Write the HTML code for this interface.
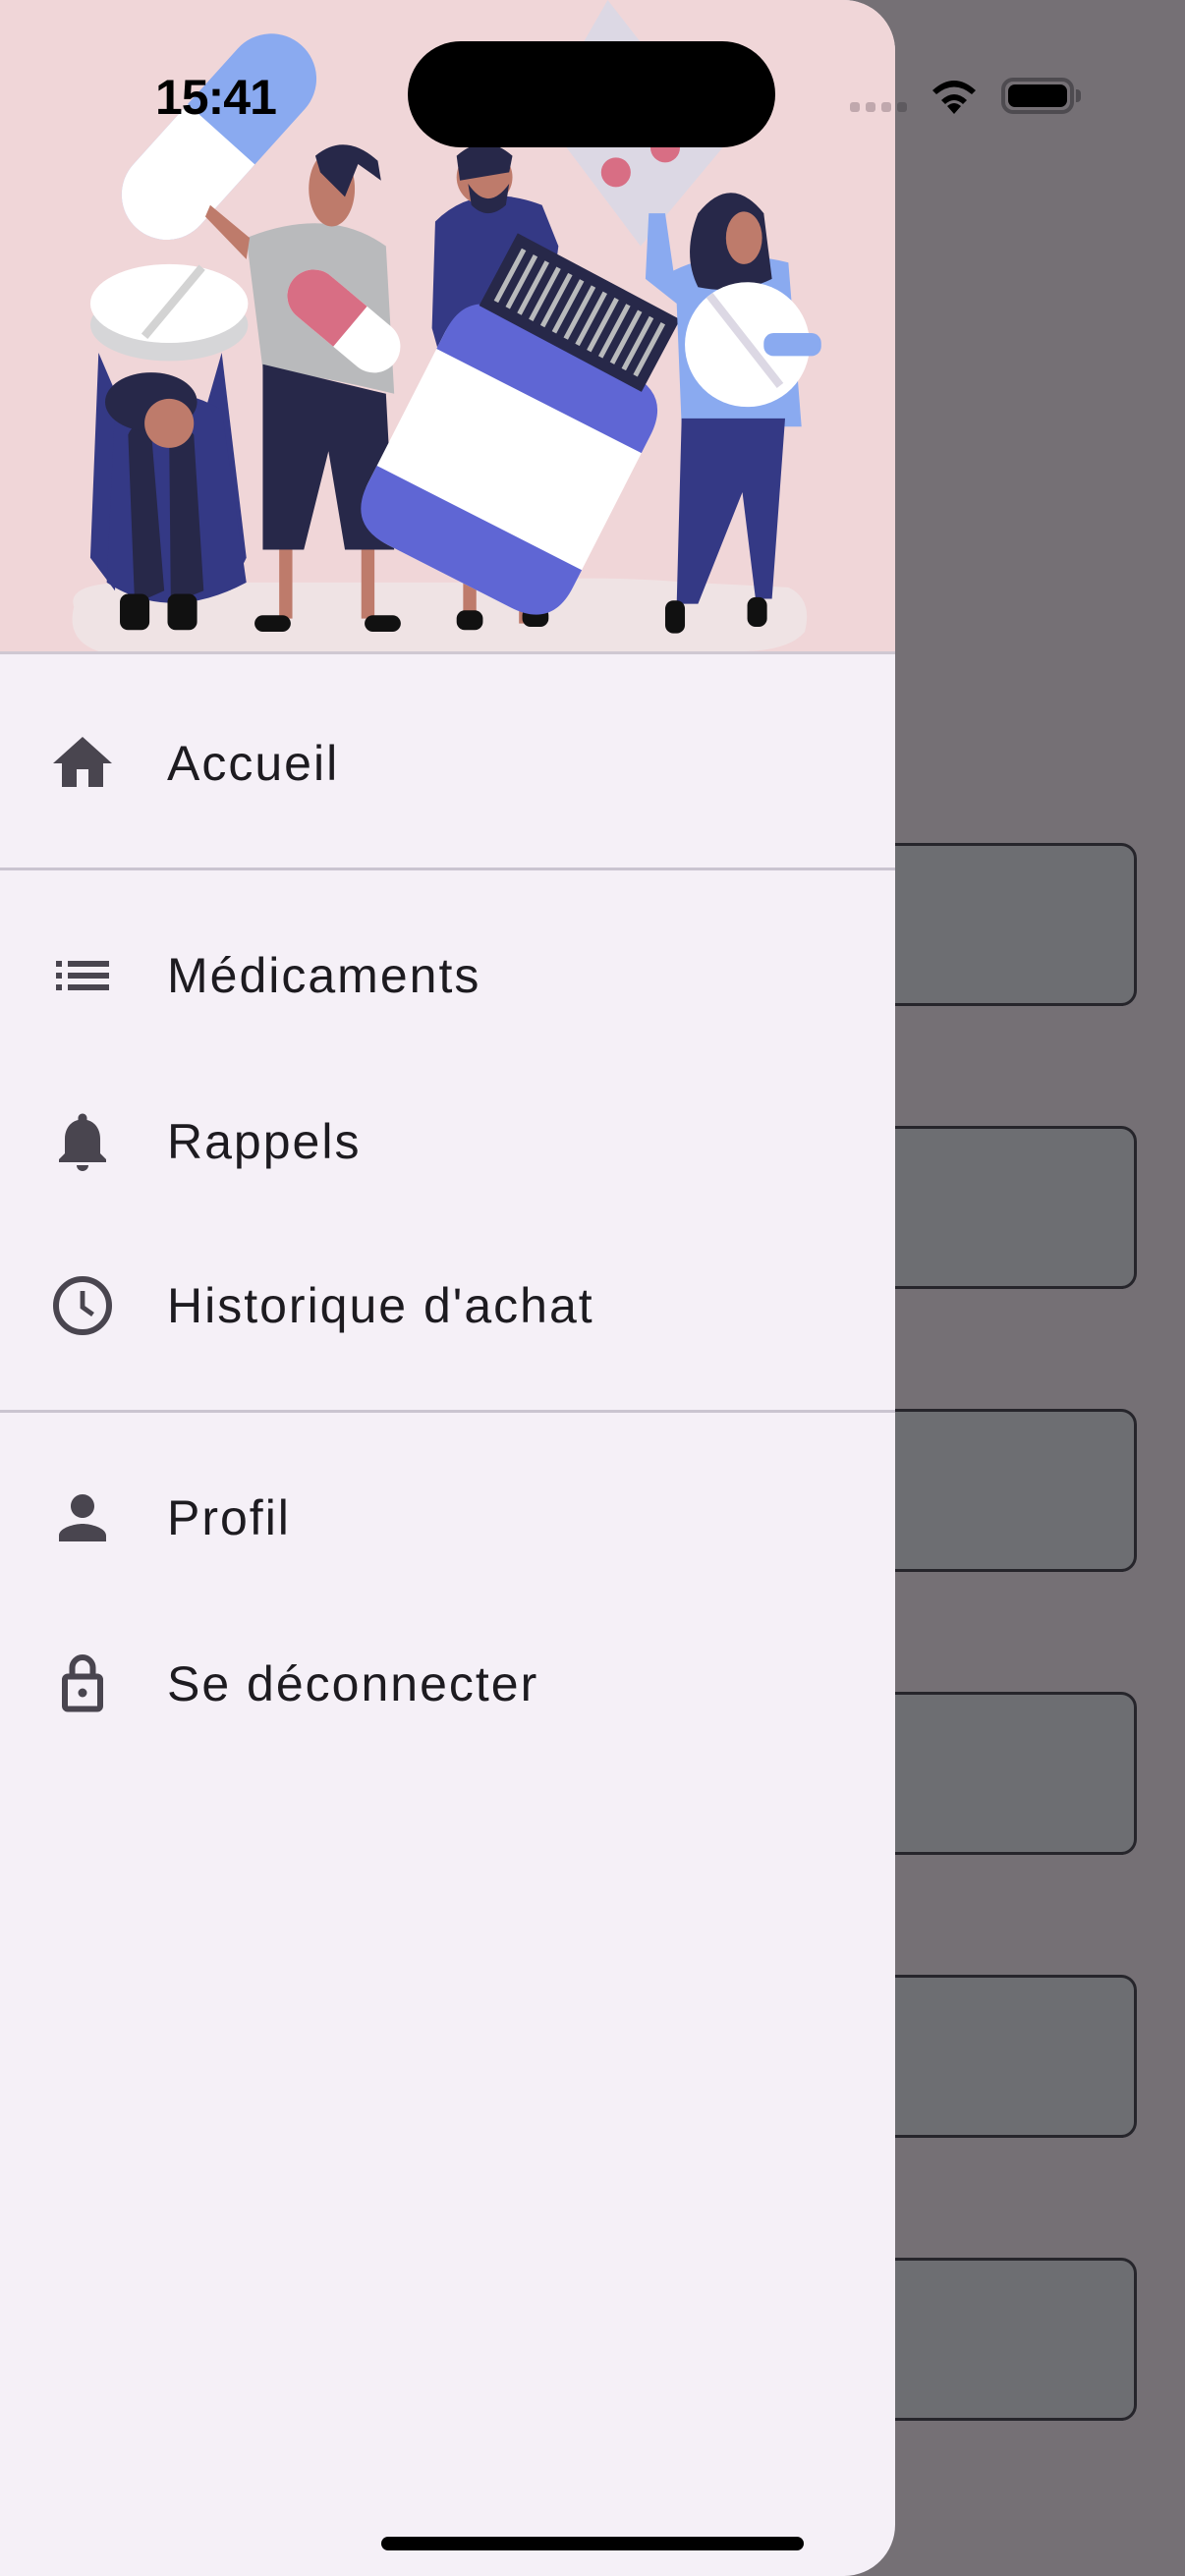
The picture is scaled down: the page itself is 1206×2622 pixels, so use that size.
<!DOCTYPE html>
<html><head><meta charset="utf-8"><style>
*{margin:0;padding:0;box-sizing:border-box}
html,body{width:1206px;height:2622px;overflow:hidden;background:#757075;font-family:"Liberation Sans",sans-serif}
.card{position:absolute;left:840px;width:317px;height:166px;background:#6d6e72;border:3px solid #26252b;border-radius:16px}
.drawer{position:absolute;left:0;top:0;width:911px;height:2622px;background:#f5f0f7;border-radius:0 52px 52px 0;overflow:hidden}
.hdr{position:absolute;left:0;top:0;width:911px;height:666px;background:#f0d6d8;border-bottom:3px solid #cfc8d2}
.div{position:absolute;left:0;width:911px;height:3px;background:#cac4d0}
.item{position:absolute;left:0;width:911px;height:100px;display:flex;align-items:center}
.item svg{position:absolute;left:48px;width:72px;height:72px}
.item span{position:absolute;left:170px;font-size:50px;letter-spacing:2px;color:#1d1b20}
</style></head><body>
<div class="card" style="top:858px"></div>
<div class="card" style="top:1146px"></div>
<div class="card" style="top:1434px"></div>
<div class="card" style="top:1722px"></div>
<div class="card" style="top:2010px"></div>
<div class="card" style="top:2298px"></div>

<div class="drawer">
<div class="hdr">
<svg width="911" height="663" viewBox="0 0 545 397" preserveAspectRatio="none">
<path d="M45 370 Q40 355 80 355 L300 355 Q360 350 420 355 L480 358 Q495 365 490 385 Q480 397 450 397 L60 397 Q40 390 45 370Z" fill="#efe3e4"/>
<!-- blister -->
<path d="M370 0 L440 90 L390 150 L330 70 Z" fill="#dcd8e4"/>
<circle cx="375" cy="105" r="9" fill="#d86e84"/><circle cx="405" cy="90" r="9" fill="#d86e84"/>
<!-- big capsule -->
<g transform="rotate(-48 133 83)">
<rect x="58" y="56" width="150" height="55" rx="27.5" fill="#8aaaf0"/>
<path d="M85.5 56 L135 56 L135 111 L85.5 111 A27.5 27.5 0 0 1 85.5 56Z" fill="#fff"/>
</g>
<!-- round pill left -->
<ellipse cx="103" cy="198" rx="48" ry="22" fill="#d6d6d8"/>
<ellipse cx="103" cy="185" rx="48" ry="24" fill="#fff"/>
<line x1="88" y1="205" x2="123" y2="163" stroke="#d3d3d3" stroke-width="5"/>
<!-- left person -->
<path d="M60 215 L55 340 L70 360 L75 250 Z" fill="#343985"/><path d="M135 215 L150 340 L140 360 L125 250 Z" fill="#343985"/>
<path d="M70 250 Q103 230 135 250 L150 355 Q103 380 65 355 Z" fill="#343985"/>
<path d="M78 265 Q82 255 92 262 L100 360 L82 368 Z M103 265 Q110 255 118 265 L124 360 L104 368 Z" fill="#272849"/>
<ellipse cx="92" cy="245" rx="28" ry="18" fill="#272849"/>
<circle cx="103" cy="258" r="15" fill="#be7b6b"/>
<rect x="73" y="362" width="18" height="22" rx="5" fill="#111"/><rect x="102" y="362" width="18" height="22" rx="5" fill="#111"/>
<!-- person 2 -->
<path d="M150 145 Q200 125 235 150 L240 240 Q200 230 160 225 Z" fill="#b9babc"/>
<path d="M160 222 L235 240 L240 335 L210 335 L200 275 L185 335 L160 335 Z" fill="#272849"/>
<path d="M128 125 L152 145 L150 158 L125 132 Z" fill="#be7b6b"/>
<rect x="170" y="335" width="8" height="42" fill="#be7b6b"/><rect x="220" y="335" width="8" height="42" fill="#be7b6b"/>
<ellipse cx="202" cy="115" rx="14" ry="23" fill="#be7b6b"/>
<path d="M192 95 Q210 80 230 98 L232 110 L218 100 L210 120 L195 105 Z" fill="#272849"/>
<rect x="155" y="375" width="22" height="10" rx="5" fill="#111"/><rect x="222" y="375" width="22" height="10" rx="5" fill="#111"/>
<g transform="rotate(40 210 195)"><rect x="170" y="180" width="80" height="32" rx="16" fill="#fff"/><rect x="170" y="180" width="45" height="32" rx="16" fill="#d86e84"/><rect x="200" y="180" width="15" height="32" fill="#d86e84"/></g>
<!-- person 3 -->
<path d="M265 135 Q290 110 330 125 L340 150 L330 225 L270 225 L263 200 Z" fill="#343985"/>
<circle cx="295" cy="108" r="17" fill="#be7b6b"/>
<path d="M278 95 Q295 80 312 95 L310 105 L280 110 Z" fill="#272849"/>
<path d="M285 112 Q297 130 310 112 L308 125 Q297 135 287 125Z" fill="#272849"/>
<rect x="282" y="350" width="8" height="30" fill="#be7b6b"/><rect x="316" y="350" width="8" height="30" fill="#be7b6b"/>
<rect x="278" y="372" width="16" height="12" rx="5" fill="#111"/><rect x="318" y="370" width="16" height="12" rx="5" fill="#111"/>
<!-- bottle -->
<g transform="rotate(27 310 280)"><rect x="240" y="200" width="140" height="160" rx="28" fill="#fff"/><path d="M240 228 Q240 200 268 200 L352 200 Q380 200 380 228 L380 240 L240 240Z" fill="#5f66d4"/><path d="M240 320 L380 320 L380 332 Q380 360 352 360 L268 360 Q240 360 240 332Z" fill="#5f66d4"/></g>
<!-- barcode -->
<g transform="rotate(28 352 190)"><rect x="297" y="165" width="112" height="50" fill="#272849"/>
<g stroke="#b9babc" stroke-width="3"><line x1="305" y1="172" x2="305" y2="208"/><line x1="313" y1="172" x2="313" y2="208"/><line x1="321" y1="172" x2="321" y2="208"/><line x1="329" y1="172" x2="329" y2="208"/><line x1="337" y1="172" x2="337" y2="208"/><line x1="345" y1="172" x2="345" y2="208"/><line x1="353" y1="172" x2="353" y2="208"/><line x1="361" y1="172" x2="361" y2="208"/><line x1="369" y1="172" x2="369" y2="208"/><line x1="377" y1="172" x2="377" y2="208"/><line x1="385" y1="172" x2="385" y2="208"/><line x1="393" y1="172" x2="393" y2="208"/><line x1="401" y1="172" x2="401" y2="208"/></g></g>
<!-- person 4 -->
<path d="M395 130 L405 130 L410 165 Q440 150 480 160 L488 260 L415 260 L412 185 L393 170 Z" fill="#8aaaf0"/>
<path d="M415 255 L478 255 L470 365 L460 365 L452 300 L425 368 L412 368 Z" fill="#343985"/>
<path d="M425 130 Q445 105 465 130 L470 170 Q450 180 425 175 Q415 155 425 130Z" fill="#272849"/>
<ellipse cx="453" cy="145" rx="11" ry="16" fill="#be7b6b"/>
<circle cx="455" cy="210" r="38" fill="#fff"/>
<line x1="432" y1="180" x2="475" y2="235" stroke="#dcd8e4" stroke-width="5"/>
<rect x="465" y="203" width="35" height="14" rx="6" fill="#8aaaf0"/>
<rect x="405" y="366" width="12" height="20" rx="5" fill="#111"/><rect x="455" y="364" width="12" height="18" rx="5" fill="#111"/>
</svg>
</div>

<div class="item" style="top:727px"><svg viewBox="0 0 24 24"><path d="M10 20v-6h4v6h5v-8h3L12 3 2 12h3v8z" fill="#49454f"/></svg><span>Accueil</span></div>
<div class="div" style="top:883px"></div>
<div class="item" style="top:943px"><svg viewBox="0 0 24 24"><path d="M3 13h2v-2H3v2zm0 4h2v-2H3v2zm0-8h2V7H3v2zm4 4h14v-2H7v2zm0 4h14v-2H7v2zM7 7v2h14V7H7z" fill="#49454f"/></svg><span>Médicaments</span></div>
<div class="item" style="top:1112px"><svg viewBox="0 0 24 24"><path d="M12 22c1.1 0 2-.9 2-2h-4c0 1.1.9 2 2 2zm6-6v-5c0-3.070-1.63-5.64-4.5-6.32V4c0-.83-.67-1.5-1.5-1.5s-1.5.67-1.5 1.5v.68C7.64 5.36 6 7.92 6 11v5l-2 2v1h16v-1l-2-2z" fill="#49454f"/></svg><span>Rappels</span></div>
<div class="item" style="top:1279px"><svg viewBox="0 0 24 24"><circle cx="12" cy="12" r="9" fill="none" stroke="#49454f" stroke-width="2"/><path d="M12 7v5.5l3.5 2.5" fill="none" stroke="#49454f" stroke-width="1.6"/></svg><span>Historique d'achat</span></div>
<div class="div" style="top:1435px"></div>
<div class="item" style="top:1495px"><svg viewBox="0 0 24 24"><path d="M12 12c2.21 0 4-1.790 4-4s-1.79-4-4-4-4 1.79-4 4 1.79 4 4 4zm0 2c-2.67 0-8 1.34-8 4v2h16v-2c0-2.66-5.33-4-8-4z" fill="#49454f"/></svg><span>Profil</span></div>
<div class="item" style="top:1664px"><svg viewBox="0 0 24 24"><path d="M8.5 9V6.5a3.5 3.5 0 0 1 7 0V9" fill="none" stroke="#49454f" stroke-width="2"/><rect x="6" y="9.5" width="12" height="11" rx="1" fill="none" stroke="#49454f" stroke-width="2"/><circle cx="12" cy="15" r="1.5" fill="#49454f"/></svg><span>Se déconnecter</span></div>
</div>

<!-- status bar -->
<div style="position:absolute;left:158px;top:70px;font-size:50px;font-weight:bold;color:#000;letter-spacing:-1px">15:41</div>
<div style="position:absolute;left:415px;top:42px;width:374px;height:108px;background:#000;border-radius:54px"></div>
<div style="position:absolute;left:865px;top:104px;width:10px;height:10px;border-radius:3px;background:#c0a8ad"></div>
<div style="position:absolute;left:881px;top:104px;width:10px;height:10px;border-radius:3px;background:#c0a8ad"></div>
<div style="position:absolute;left:897px;top:104px;width:10px;height:10px;border-radius:3px;background:#c0a8ad"></div>
<div style="position:absolute;left:913px;top:104px;width:10px;height:10px;border-radius:3px;background:#5e5a5f"></div>
<svg style="position:absolute;left:945px;top:78px" width="52" height="38" viewBox="0 0 52 38"><path d="M26 38 L19 30 Q26 24 33 30Z M13 24 Q26 12 39 24 L35 28 Q26 20 17 28Z M4 14 Q26 -6 48 14 L44 18 Q26 3 8 18Z" fill="#000"/></svg>
<div style="position:absolute;left:1019px;top:79px;width:74px;height:37px;border:4px solid #4e4b50;border-radius:12px;padding:3px"><div style="width:100%;height:100%;background:#000;border-radius:7px"></div></div>
<div style="position:absolute;left:1095px;top:91px;width:5px;height:13px;background:#4e4b50;border-radius:0 4px 4px 0"></div>
<div style="position:absolute;left:388px;top:2582px;width:430px;height:14px;background:#000;border-radius:7px"></div>
</body></html>
